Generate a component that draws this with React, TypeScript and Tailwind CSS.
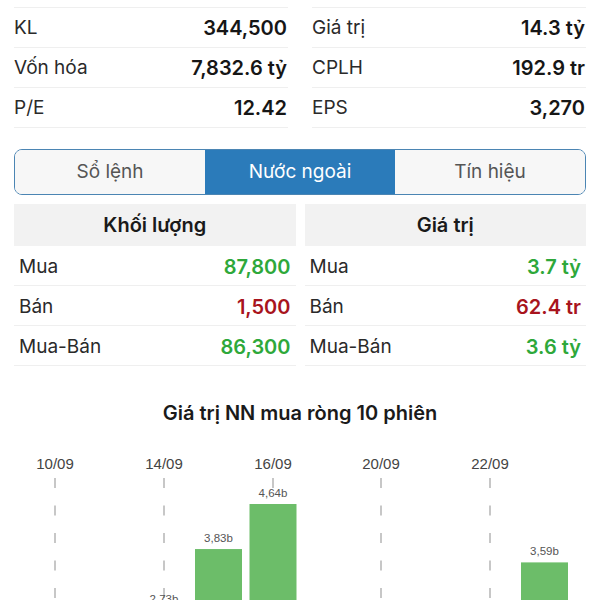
import React from 'react';

const stats = [
  [
    { label: 'KL', value: '344,500' },
    { label: 'Vốn hóa', value: '7,832.6 tỷ' },
    { label: 'P/E', value: '12.42' },
  ],
  [
    { label: 'Giá trị', value: '14.3 tỷ' },
    { label: 'CPLH', value: '192.9 tr' },
    { label: 'EPS', value: '3,270' },
  ],
];

const foreign = [
  {
    title: 'Khối lượng',
    rows: [
      { label: 'Mua', value: '87,800', up: true },
      { label: 'Bán', value: '1,500', up: false },
      { label: 'Mua-Bán', value: '86,300', up: true },
    ],
  },
  {
    title: 'Giá trị',
    rows: [
      { label: 'Mua', value: '3.7 tỷ', up: true },
      { label: 'Bán', value: '62.4 tr', up: false },
      { label: 'Mua-Bán', value: '3.6 tỷ', up: true },
    ],
  },
];

const tabs = ['Sổ lệnh', 'Nước ngoài', 'Tín hiệu'];

// chart: 10 sessions, ~54.5px each, zero line far below the visible area
const dates = [
  { text: '10/09', x: 55 },
  { text: '14/09', x: 164 },
  { text: '16/09', x: 273 },
  { text: '20/09', x: 381 },
  { text: '22/09', x: 490 },
];

const bars = [
  { x: 164, value: 2.73, label: '2,73b' },
  { x: 218.5, value: 3.83, label: '3,83b' },
  { x: 273, value: 4.64, label: '4,64b' },
  { x: 544.5, value: 3.59, label: '3,59b' },
];

const ZERO_Y = 321;
const SCALE = 55.6;

const NetBuyChart: React.FC = () => {
  const dashes = [0, 1, 2, 3, 4];
  return (
    <svg width="600" height="160" viewBox="0 0 600 160" className="block">
      {dates.map((d) => (
        <g key={d.text}>
          <text
            x={d.x}
            y={28}
            textAnchor="middle"
            fontSize="15"
            fill="#444"
            fontFamily="'Liberation Sans', Arial, sans-serif"
          >
            {d.text}
          </text>
          {dashes.map((i) => (
            <line
              key={i}
              x1={d.x}
              x2={d.x}
              y1={37 + i * 27.5}
              y2={47 + i * 27.5}
              stroke="#b5b5b5"
              strokeWidth="1.5"
            />
          ))}
        </g>
      ))}
      {bars.map((b) => {
        const top = ZERO_Y - b.value * SCALE;
        return (
          <g key={b.label}>
            <rect x={b.x - 23.5} y={top} width="47" height={160 - top + 10} fill="#6cbd69" />
            <text
              x={b.x}
              y={top - 7}
              textAnchor="middle"
              fontSize="11.5"
              fill="#555"
              fontFamily="'Liberation Sans', Arial, sans-serif"
            >
              {b.label}
            </text>
          </g>
        );
      })}
    </svg>
  );
};

export default function App() {
  return (
    <div className="h-[600px] w-[600px] overflow-hidden bg-white font-['Inter','Liberation_Sans',sans-serif] text-[#2a2a2a]">
      {/* Summary stats */}
      <div className="grid grid-cols-2 gap-[24px] px-[14px] pt-[7px]">
        {stats.map((col, ci) => (
          <div key={ci} className="border-t border-[#efefef]">
            {col.map((s) => (
              <div key={s.label} className="flex h-[40px] items-center justify-between border-b border-[#efefef] pt-[1px]">
                <span className="text-[19px]">{s.label}</span>
                <span className="pr-[1px] text-[20px] font-semibold text-[#161616]">{s.value}</span>
              </div>
            ))}
          </div>
        ))}
      </div>

      {/* Tabs */}
      <div className="mx-[14px] mt-[21px] flex h-[46px] overflow-hidden rounded-[8px] border-[1.5px] border-[#4b85b3]">
        {tabs.map((t, i) => (
          <div
            key={t}
            className={
              i === 1
                ? 'flex flex-1 items-center justify-center bg-[#2b7bba] text-[19px] text-white'
                : 'flex flex-1 items-center justify-center bg-[#f7f7f7] text-[19px] text-[#555]'
            }
          >
            {t}
          </div>
        ))}
      </div>

      {/* Foreign trading */}
      <div className="mt-[9px] grid grid-cols-2 gap-[9px] px-[14px]">
        {foreign.map((f) => (
          <div key={f.title}>
            <div className="flex h-[42px] items-center justify-center bg-[#f2f2f2] text-[20px] font-semibold text-[#1a1a1a]">
              {f.title}
            </div>
            {f.rows.map((r) => (
              <div key={r.label} className="flex h-[40px] items-center justify-between border-b border-[#efefef] px-[5px] pt-[3px]">
                <span className="text-[19px]">{r.label}</span>
                <span
                  className={
                    r.up
                      ? 'text-[20px] font-semibold text-[#2ea83a]'
                      : 'text-[20px] font-semibold text-[#a8141d]'
                  }
                >
                  {r.value}
                </span>
              </div>
            ))}
          </div>
        ))}
      </div>

      {/* Chart */}
      <div className="mt-[32px] text-center text-[20px] font-semibold text-[#1a1a1a]">
        Giá trị NN mua ròng 10 phiên
      </div>
      <div className="mt-[13px]">
        <NetBuyChart />
      </div>
    </div>
  );
}
